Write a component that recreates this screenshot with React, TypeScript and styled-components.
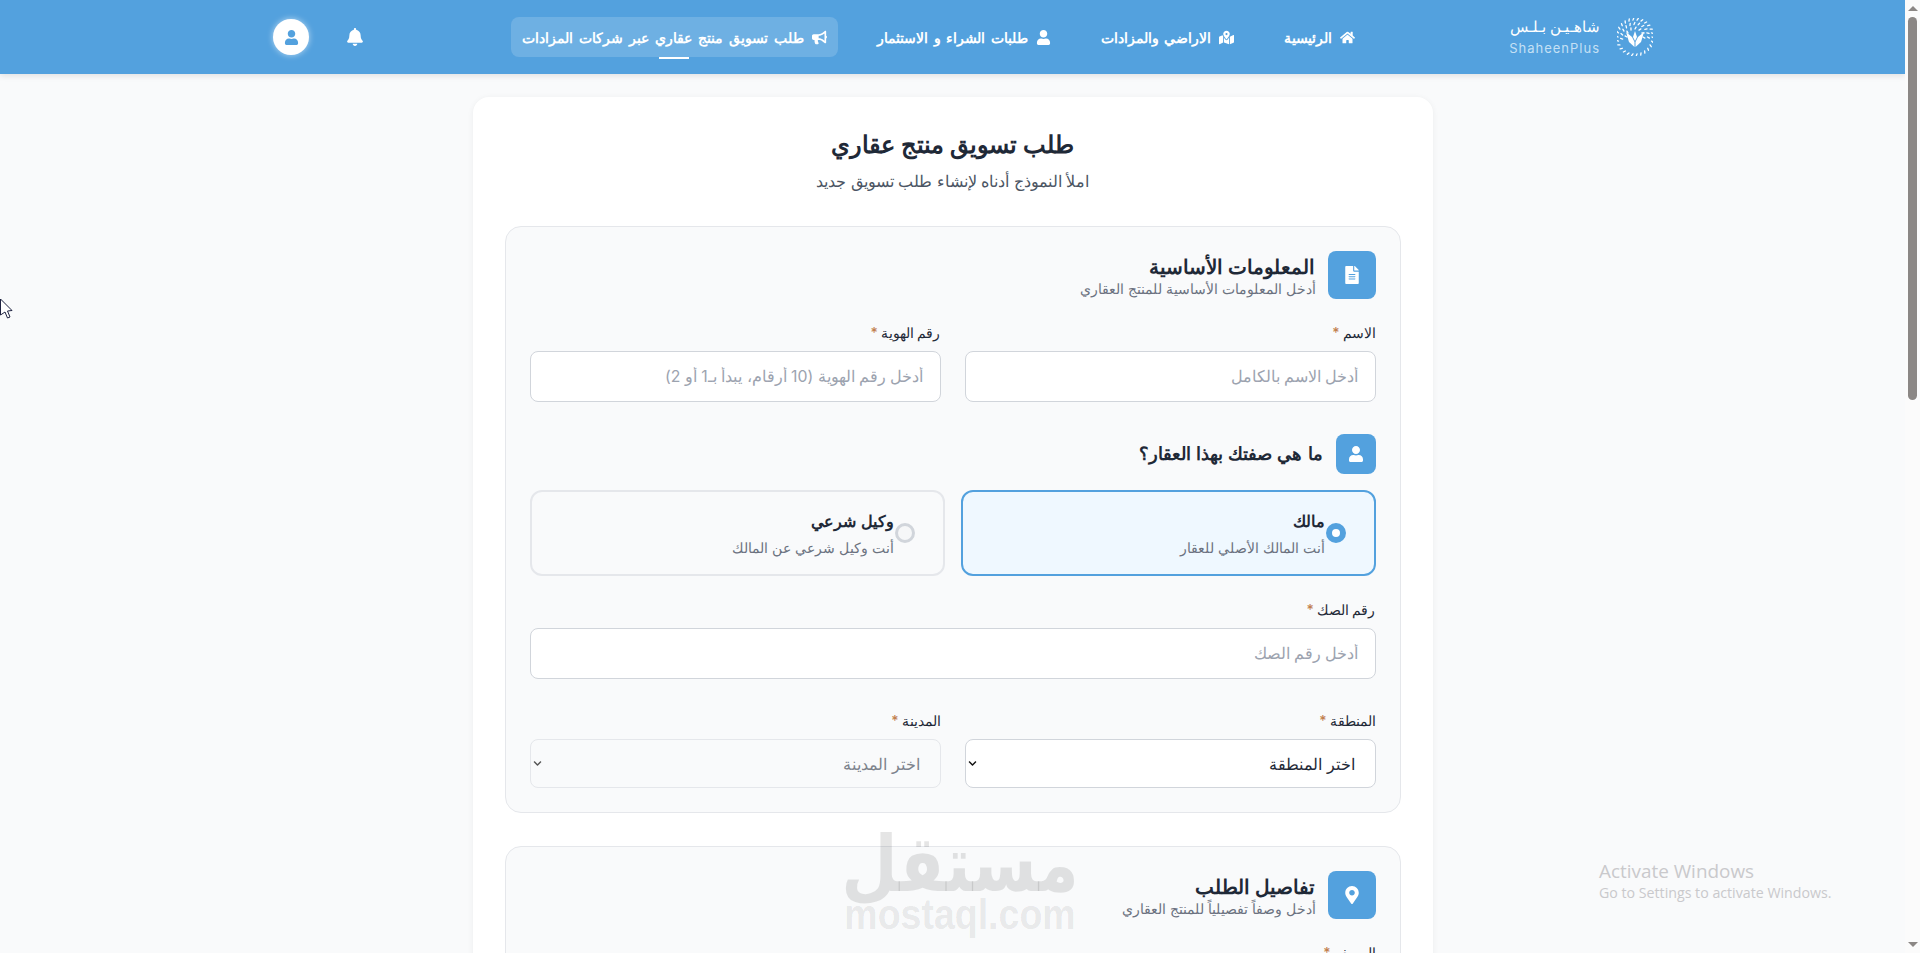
import React from "react";
import styled, { createGlobalStyle } from "styled-components";
import {
  FaBell,
  FaBullhorn,
  FaChevronDown,
  FaFileAlt,
  FaHome,
  FaMapMarkedAlt,
  FaMapMarkerAlt,
  FaUser,
} from "react-icons/fa";

const GlobalStyle = createGlobalStyle`
  html, body {
    margin: 0;
    padding: 0;
    height: 100%;
    overflow: hidden;
    background: #f9fafb;
    font-family: Inter, "Noto Sans", sans-serif;
  }
  * { box-sizing: border-box; }
`;

const Shell = styled.div`
  display: flex;
  height: 953px;
  overflow: hidden;
  position: relative;
`;

const Page = styled.div`
  flex: 1;
  min-width: 0;
  height: 953px;
  overflow: hidden;
  position: relative;
  direction: rtl;
  background: #f9fafb;
`;

const ScrollTrack = styled.div`
  width: 15px;
  flex: none;
  background: #fbfbfb;
  display: flex;
  flex-direction: column;
  align-items: center;
  padding-top: 6px;
`;

const ArrowUp = styled.div`
  width: 0;
  height: 0;
  border-left: 5px solid transparent;
  border-right: 5px solid transparent;
  border-bottom: 5px solid #8b8785;
`;

const ArrowDown = styled.div`
  width: 0;
  height: 0;
  border-left: 5px solid transparent;
  border-right: 5px solid transparent;
  border-top: 5px solid #8b8785;
  margin-top: auto;
  margin-bottom: 6px;
`;

const Thumb = styled.div`
  width: 9px;
  height: 383px;
  margin-top: 6px;
  border-radius: 5px;
  background: #8b8785;
`;

const Header = styled.header`
  height: 74px;
  background: #53a1de;
  box-shadow: 0 2px 6px rgba(0, 0, 0, 0.1);
  display: flex;
  align-items: center;
  padding: 0 252px 0 273px;
`;

const Brand = styled.div`
  display: flex;
  align-items: center;
  gap: 17px;
  margin-left: 143px;
`;

const BrandText = styled.div`
  display: flex;
  flex-direction: column;
  align-items: flex-start;
  color: #fff;
`;

const BrandArabic = styled.span`
  font-size: 15px;
  line-height: 20px;
  font-weight: 400;
`;

const BrandLatin = styled.span`
  font-size: 13px;
  line-height: 18px;
  margin-top: 2px;
  letter-spacing: 1px;
  color: #c4e0f5;
  direction: ltr;
`;

const Nav = styled.nav`
  display: flex;
  align-items: center;
  flex: 1;
`;

const NavItem = styled.a<{ $active?: boolean }>`
  position: relative;
  height: 40px;
  display: flex;
  align-items: center;
  gap: 8px;
  padding: 0 11px;
  border-radius: 8px;
  margin-left: ${(p) => (p.$active ? 0 : 28)}px;
  background: ${(p) => (p.$active ? "rgba(255,255,255,0.16)" : "transparent")};
  color: #fff;
  font-size: 14px;
  font-weight: 600;
  word-spacing: ${(p) => (p.$active ? 2.5 : 2)}px;
  white-space: nowrap;

  svg {
    font-size: 15px;
    flex: none;
  }
`;

const NavUnderline = styled.span`
  position: absolute;
  left: 50%;
  bottom: -2px;
  width: 30px;
  height: 2px;
  margin-left: -15px;
  background: #fff;
`;

const HeaderActions = styled.div`
  display: flex;
  align-items: center;
  gap: 37px;
  margin-right: auto;
`;

const BellButton = styled.span`
  color: #fff;
  font-size: 18px;
  display: flex;
`;

const Avatar = styled.span`
  width: 36px;
  height: 36px;
  border-radius: 50%;
  background: #fff;
  color: #53a1de;
  display: flex;
  align-items: center;
  justify-content: center;
  font-size: 15px;
  box-shadow: 0 0 6px rgba(255, 255, 255, 0.6);
`;

const Main = styled.main`
  display: flex;
  justify-content: center;
  padding-top: 23px;
`;

const Card = styled.div`
  width: 960px;
  background: #fff;
  border-radius: 16px;
  box-shadow: 0 1px 6px rgba(0, 0, 0, 0.06);
  padding: 32px;
`;

const PageTitle = styled.h1`
  margin: 0;
  text-align: center;
  font-size: 24px;
  line-height: 32px;
  font-weight: 700;
  color: #1f2937;
`;

const PageSubtitle = styled.p`
  margin: 8px 0 0;
  text-align: center;
  font-size: 16px;
  line-height: 24px;
  color: #4b5563;
`;

const Section = styled.section`
  margin-top: 33px;
  background: #f9fafb;
  border: 1px solid #e5e7eb;
  border-radius: 16px;
  padding: 24px;
`;

const SectionHead = styled.div`
  display: flex;
  align-items: center;
  gap: 12px;
`;

const IconTile = styled.div<{ $size: number }>`
  width: ${(p) => p.$size}px;
  height: ${(p) => p.$size}px;
  flex: none;
  border-radius: 8px;
  background: #53a1de;
  color: #fff;
  display: flex;
  align-items: center;
  justify-content: center;
  font-size: ${(p) => (p.$size > 40 ? 18 : 16)}px;
`;

const SectionTitle = styled.h2`
  margin: 0;
  padding-top: 4px;
  font-size: 20px;
  line-height: 24px;
  font-weight: 600;
  color: #1f2937;
`;

const SectionHint = styled.p`
  margin: 0;
  font-size: 14px;
  line-height: 20px;
  color: #6b7280;
`;

const FieldGrid = styled.div<{ $cols?: number; $top: number }>`
  display: grid;
  grid-template-columns: repeat(${(p) => p.$cols ?? 2}, 1fr);
  column-gap: 24px;
  margin-top: ${(p) => p.$top}px;
`;

const Field = styled.div`
  display: flex;
  flex-direction: column;
`;

const Label = styled.label`
  font-size: 14px;
  line-height: 20px;
  font-weight: 500;
  color: #1f2937;
  margin-bottom: 8px;
`;

const Star = styled.span`
  color: #c2804f;
  margin-right: 3px;
`;

const TextInput = styled.input`
  height: 51px;
  width: 100%;
  padding: 0 16px;
  border: 1px solid #d1d5db;
  border-radius: 8px;
  background: #fff;
  font-family: inherit;
  font-size: 15.8px;
  direction: rtl;
  outline: none;

  &::placeholder {
    color: #9ca3af;
    opacity: 1;
  }
`;

const SelectBox = styled.div<{ $disabled?: boolean }>`
  height: 49px;
  border: 1px solid ${(p) => (p.$disabled ? "#e5e7eb" : "#d1d5db")};
  border-radius: 8px;
  background: ${(p) => (p.$disabled ? "#f9fafb" : "#fff")};
  color: ${(p) => (p.$disabled ? "#7d838c" : "#1f2937")};
  display: flex;
  align-items: center;
  justify-content: space-between;
  padding: 0 20px 0 2px;
  font-size: 16px;

  svg {
    font-size: 9px;
    color: ${(p) => (p.$disabled ? "#555" : "#111")};
  }
`;

const RoleHead = styled.div`
  display: flex;
  align-items: center;
  gap: 13px;
  margin-top: 32px;
`;

const RoleTitle = styled.h3`
  margin: 0;
  font-size: 18px;
  line-height: 24px;
  font-weight: 600;
  word-spacing: 0.5px;
  color: #1f2937;
`;

const RoleGrid = styled.div`
  display: grid;
  grid-template-columns: 1fr 1fr;
  gap: 16px;
  margin-top: 16px;
`;

const RoleCard = styled.div<{ $selected?: boolean }>`
  height: 86px;
  display: flex;
  align-items: center;
  padding-right: 28px;
  border: 2px solid ${(p) => (p.$selected ? "#53a1de" : "#e5e7eb")};
  border-radius: 12px;
  background: ${(p) => (p.$selected ? "#eff8ff" : "#f9fafb")};
`;

const Radio = styled.span<{ $selected?: boolean }>`
  width: 20px;
  height: 20px;
  flex: none;
  border-radius: 50%;
  background: ${(p) => (p.$selected ? "#fff" : "#f6f7f8")};
  border: ${(p) => (p.$selected ? "6px solid #53a1de" : "3px solid #d1d5db")};
`;

const RoleText = styled.div`
  margin-right: 1px;
  padding-top: 2px;
`;

const RoleName = styled.div`
  font-size: 16px;
  line-height: 26px;
  font-weight: 600;
  color: #1f2937;
`;

const RoleHint = styled.div`
  margin-top: 1px;
  font-size: 14px;
  line-height: 26px;
  color: #6b7280;
`;

const Watermark = styled.div`
  position: absolute;
  left: 845px;
  top: 837px;
  width: 230px;
  display: flex;
  flex-direction: column;
  align-items: center;
  color: rgba(0, 0, 0, 0.1);
  pointer-events: none;
`;

const WatermarkArabic = styled.span`
  font-family: "DejaVu Sans", sans-serif;
  font-size: 65px;
  line-height: 56px;
  font-weight: 700;
  transform: scaleY(1.2);
`;

const WatermarkLatin = styled.span`
  font-family: "Liberation Sans", sans-serif;
  font-size: 37.5px;
  line-height: 28px;
  margin-top: 7px;
  font-weight: 700;
  direction: ltr;
  color: rgba(0, 0, 0, 0.085);
  transform: scaleY(1.15);
`;

const ActivateNote = styled.div`
  position: absolute;
  left: 1599px;
  top: 859px;
  direction: ltr;
  font-family: "Open Sans", sans-serif;
  color: #c9c9cc;
  pointer-events: none;
`;

const ActivateTitle = styled.div`
  font-size: 18.9px;
  line-height: 24px;
`;

const ActivateHint = styled.div`
  font-size: 14.2px;
  line-height: 20px;
`;

const Pointer = styled.svg`
  position: absolute;
  left: 0;
  top: 298px;
`;

// emblem is a ring of short ticks round a small winged shape
function LogoMark() {
  const ticks: React.ReactNode[] = [];
  for (let r = 0; r < 3; r++) {
    const radius = 17 - r * 4.5;
    const count = 26 - r * 7;
    for (let i = 0; i < count; i++) {
      const a = (i / count) * Math.PI * 2;
      const x = 18 + Math.cos(a) * radius;
      const y = 19 + Math.sin(a) * radius;
      if (r > 0 && y > 22) continue;
      ticks.push(
        <line
          key={`${r}-${i}`}
          x1={x}
          y1={y}
          x2={x + Math.cos(a + 0.5) * 2.2}
          y2={y + Math.sin(a + 0.5) * 2.2}
          stroke="#fff"
          strokeWidth="1.3"
          strokeLinecap="round"
        />
      );
    }
  }
  return (
    <svg width="36" height="38" viewBox="0 0 36 38">
      {ticks}
      <path d="M17.5 29 L12 24 L9 14 L15 19 L17.5 24 Z" fill="#fff" />
      <path d="M18.5 29 L24 24 L27 14 L21 19 L18.5 24 Z" fill="#fff" />
      <path d="M18 13 L20 19 L18 23 L16 19 Z" fill="#fff" />
    </svg>
  );
}

export default function App() {
  return (
    <Shell>
      <GlobalStyle />
      <Page>
        <Header>
          <Brand>
            <LogoMark />
            <BrandText>
              <BrandArabic>شاهـيـن بـلـس</BrandArabic>
              <BrandLatin>ShaheenPlus</BrandLatin>
            </BrandText>
          </Brand>
          <Nav>
            <NavItem>
              <FaHome />
              الرئيسية
            </NavItem>
            <NavItem>
              <FaMapMarkedAlt />
              الاراضي والمزادات
            </NavItem>
            <NavItem>
              <FaUser />
              طلبات الشراء و الاستثمار
            </NavItem>
            <NavItem $active>
              <FaBullhorn />
              طلب تسويق منتج عقاري عبر شركات المزادات
              <NavUnderline />
            </NavItem>
          </Nav>
          <HeaderActions>
            <BellButton>
              <FaBell />
            </BellButton>
            <Avatar>
              <FaUser />
            </Avatar>
          </HeaderActions>
        </Header>

        <Main>
          <Card>
            <PageTitle>طلب تسويق منتج عقاري</PageTitle>
            <PageSubtitle>املأ النموذج أدناه لإنشاء طلب تسويق جديد</PageSubtitle>

            <Section>
              <SectionHead>
                <IconTile $size={48}>
                  <FaFileAlt />
                </IconTile>
                <div>
                  <SectionTitle>المعلومات الأساسية</SectionTitle>
                  <SectionHint>أدخل المعلومات الأساسية للمنتج العقاري</SectionHint>
                </div>
              </SectionHead>

              <FieldGrid $top={24}>
                <Field>
                  <Label>
                    الاسم<Star>*</Star>
                  </Label>
                  <TextInput placeholder="أدخل الاسم بالكامل" />
                </Field>
                <Field>
                  <Label>
                    رقم الهوية<Star>*</Star>
                  </Label>
                  <TextInput placeholder="أدخل رقم الهوية (10 أرقام، يبدأ بـ1 أو 2)" />
                </Field>
              </FieldGrid>

              <RoleHead>
                <IconTile $size={40}>
                  <FaUser />
                </IconTile>
                <RoleTitle>ما هي صفتك بهذا العقار؟</RoleTitle>
              </RoleHead>

              <RoleGrid>
                <RoleCard $selected>
                  <Radio $selected />
                  <RoleText>
                    <RoleName>مالك</RoleName>
                    <RoleHint>أنت المالك الأصلي للعقار</RoleHint>
                  </RoleText>
                </RoleCard>
                <RoleCard>
                  <Radio />
                  <RoleText>
                    <RoleName>وكيل شرعي</RoleName>
                    <RoleHint>أنت وكيل شرعي عن المالك</RoleHint>
                  </RoleText>
                </RoleCard>
              </RoleGrid>

              <FieldGrid $cols={1} $top={24}>
                <Field>
                  <Label>
                    رقم الصك<Star>*</Star>
                  </Label>
                  <TextInput placeholder="أدخل رقم الصك" />
                </Field>
              </FieldGrid>

              <FieldGrid $top={32}>
                <Field>
                  <Label>
                    المنطقة<Star>*</Star>
                  </Label>
                  <SelectBox>
                    اختر المنطقة
                    <FaChevronDown />
                  </SelectBox>
                </Field>
                <Field>
                  <Label>
                    المدينة<Star>*</Star>
                  </Label>
                  <SelectBox $disabled>
                    اختر المدينة
                    <FaChevronDown />
                  </SelectBox>
                </Field>
              </FieldGrid>
            </Section>

            <Section>
              <SectionHead>
                <IconTile $size={48}>
                  <FaMapMarkerAlt />
                </IconTile>
                <div>
                  <SectionTitle>تفاصيل الطلب</SectionTitle>
                  <SectionHint>أدخل وصفاً تفصيلياً للمنتج العقاري</SectionHint>
                </div>
              </SectionHead>
              <FieldGrid $cols={1} $top={24}>
                <Field>
                  <Label>
                    الوصف<Star>*</Star>
                  </Label>
                </Field>
              </FieldGrid>
            </Section>
          </Card>
        </Main>

        <Watermark>
          <WatermarkArabic>مستقل</WatermarkArabic>
          <WatermarkLatin>mostaql.com</WatermarkLatin>
        </Watermark>
        <ActivateNote>
          <ActivateTitle>Activate Windows</ActivateTitle>
          <ActivateHint>Go to Settings to activate Windows.</ActivateHint>
        </ActivateNote>
        <Pointer width="14" height="22" viewBox="0 0 14 22">
          <path
            d="M0.5 1 L12 12.5 L7.5 13 L10 19 L7.5 20 L5 14 L0.5 17 Z"
            fill="#fff"
            stroke="#1e2240"
            strokeWidth="1"
          />
        </Pointer>
      </Page>
      <ScrollTrack>
        <ArrowUp />
        <Thumb />
        <ArrowDown />
      </ScrollTrack>
    </Shell>
  );
}
